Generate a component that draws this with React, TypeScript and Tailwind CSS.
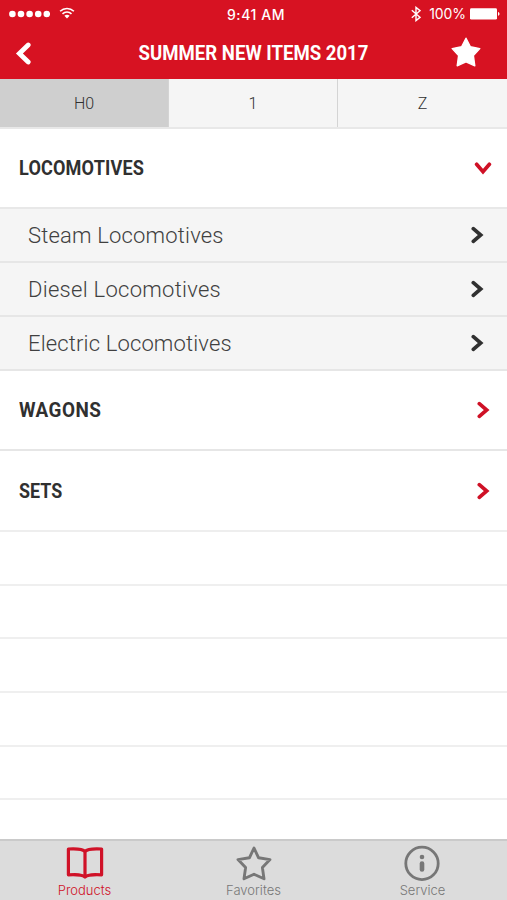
import React, { useState } from 'react';

const scales = ['H0', '1', 'Z'];

const subItems = [
  { label: 'Steam Locomotives', text: 'tracking-[0.18px]' },
  { label: 'Diesel Locomotives', text: 'tracking-[0.28px]' },
  { label: 'Electric Locomotives', text: 'tracking-[0.15px]' },
];

const Chevron: React.FC<{ className?: string }> = ({ className }) => (
  <svg
    width="18"
    height="18"
    viewBox="0 0 18 18"
    fill="none"
    stroke="currentColor"
    strokeWidth="3.7"
    strokeLinecap="round"
    className={className}
  >
    <path d="M5.3 2.6 L12.7 9 L5.3 15.4" strokeLinejoin="miter" />
  </svg>
);

const StatusBar: React.FC = () => (
  <div className="flex h-[27px] items-center justify-between pl-[9px] pr-[7px]">
    <div className="flex w-[180px] items-center">
      <svg width="41" height="8" viewBox="0 0 41 8" fill="currentColor">
        <circle cx="3.4" cy="4" r="3.3" />
        <circle cx="12" cy="4" r="3.3" />
        <circle cx="20.6" cy="4" r="3.3" />
        <circle cx="29.2" cy="4" r="3.3" />
        <circle cx="37.8" cy="4" r="3.3" />
      </svg>
      <svg width="16" height="12" viewBox="0 0 16 12" fill="none" stroke="currentColor" className="mb-[2px] ml-[9px]">
        <path d="M1.1 4.3 C5 .5 11 .5 14.9 4.3" strokeWidth="1.6" />
        <path d="M3.5 6.8 C6 4.4 10 4.4 12.5 6.8" strokeWidth="1.6" />
        <path d="M8 11.4 L5.4 8.8 C6.9 7.5 9.1 7.5 10.6 8.8 Z" fill="currentColor" stroke="none" />
      </svg>
    </div>
    <span className="pt-[1px] pl-[3px] text-[14px] font-medium tracking-[0.55px]">9:41 AM</span>
    <div className="flex w-[180px] items-center justify-end">
      <svg width="10" height="16" viewBox="0 0 10 16" fill="none" stroke="currentColor" strokeWidth="1.4">
        <path d="M.8 4.2 L9 11.3 L5 14.6 V1.4 L9 4.7 L.8 11.8" />
      </svg>
      <span className="ml-[8px] text-[14px] tracking-[-0.1px]">100%</span>
      <svg width="30" height="12" viewBox="0 0 30 12" fill="currentColor" className="ml-[4px]">
        <rect x="0" y="0.2" width="27" height="11.4" rx="1.4" />
        <path d="M28 4 C30 4.4 30 7.4 28 7.8 Z" />
      </svg>
    </div>
  </div>
);

interface SectionRowProps {
  title: string;
  text: string;
  open?: boolean;
  onClick?: () => void;
}

const SectionRow: React.FC<SectionRowProps> = ({ title, text, open, onClick }) => (
  <button
    onClick={onClick}
    className="flex w-full items-center justify-between pl-[19px] pr-[15px] text-left text-[#303030]"
  >
    <span className={`origin-left pt-[2px] text-[21px] font-bold ${text}`}>{title}</span>
    <Chevron className={open ? 'rotate-90 text-[#cf1126]' : 'text-[#cf1126]'} />
  </button>
);

const App: React.FC = () => {
  const [scale, setScale] = useState('H0');
  const [open, setOpen] = useState(true);

  return (
    <div className="flex h-[900px] w-[507px] flex-col overflow-hidden bg-white font-['Inter','Liberation_Sans',sans-serif]">
      <header className="h-[79px] shrink-0 bg-[#d71222] text-white">
        <StatusBar />
        <div className="grid h-[52px] grid-cols-[80px_1fr_80px] items-center">
          <svg
            width="18"
            height="24"
            viewBox="0 0 18 24"
            fill="none"
            stroke="currentColor"
            strokeWidth="4.8"
            strokeLinecap="round"
            className="ml-[15px]"
          >
            <path d="M13.2 4 L4.4 12.5 L13.2 21" />
          </svg>
          <h1 className="scale-x-[0.885] pt-[1px] text-center text-[21px] font-bold whitespace-nowrap font-['Roboto',sans-serif]">
            SUMMER NEW ITEMS 2017
          </h1>
          <svg
            width="30"
            height="30"
            viewBox="0 0 30 30"
            fill="currentColor"
            stroke="currentColor"
            strokeWidth="1.4"
            strokeLinejoin="round"
            className="mb-[2px] ml-[24px]"
          >
            <path d="M15 1.2 L19.4 9.8 L28.8 11.6 L22.4 18.6 L23.8 28.8 L15 24.8 L6.2 28.8 L7.6 18.6 L1.2 11.6 L10.6 9.8 Z" />
          </svg>
        </div>
      </header>

      <nav className="grid h-[50px] shrink-0 grid-cols-3 border-b-2 border-[#e8e8e8]">
        {scales.map((s) => (
          <button
            key={s}
            onClick={() => setScale(s)}
            className={`border-r border-[#d4d4d4] pt-[2px] text-[16px] font-light text-[#303030] last:border-r-0 font-['Roboto',sans-serif] ${
              scale === s ? 'bg-[#cfcfcf]' : 'bg-[#f5f5f5]'
            }`}
          >
            {s}
          </button>
        ))}
      </nav>

      <main className="flex-1 overflow-hidden font-['Roboto',sans-serif]">
        <div className="flex h-[80px] border-b-2 border-[#e8e8e8]">
          <SectionRow
            title="LOCOMOTIVES"
            text="scale-x-[0.86] tracking-[0.2px]"
            open={open}
            onClick={() => setOpen(!open)}
          />
        </div>
        {open &&
          subItems.map((item) => (
            <div
              key={item.label}
              className="flex h-[54px] items-center justify-between border-b-2 border-[#e6e6e6] bg-[#f5f5f5] pr-[21px] pl-[28px] text-[#303030]"
            >
              <span className={`pt-[1px] text-[22px] font-light whitespace-nowrap text-[#404040] ${item.text}`}>{item.label}</span>
              <Chevron />
            </div>
          ))}
        <div className="flex h-[80px] border-b-2 border-[#e6e6e6]">
          <SectionRow title="WAGONS" text="scale-x-[0.9] tracking-[0.5px]" />
        </div>
        <div className="flex h-[81px] border-b-2 border-[#eeeeee]">
          <SectionRow title="SETS" text="scale-x-[0.85]" />
        </div>
        {[0, 1, 2, 3, 4].map((row) => (
          <div key={row} className="h-[53.7px] border-b-2 border-[#efefef]" />
        ))}
      </main>

      <footer className="grid h-[61px] shrink-0 grid-cols-3 border-t-2 border-[#cacaca] bg-[#dcdcdc] text-[#777777] font-['Inter',sans-serif]">
        <button className="flex flex-col items-center pt-[4px] text-[#d01228]">
          <svg width="40" height="36" viewBox="0 0 40 36" fill="none" stroke="currentColor" strokeWidth="3.2" strokeLinejoin="round">
            <path d="M20 6.6 C17.6 3.8 13 3.4 3.4 4 V29.8 C12 29.4 17 29.4 20 32 C23 29.4 28 29.4 36.6 29.8 V4 C27 3.4 22.4 3.8 20 6.6 Z M20 7 V32" />
          </svg>
          <span className="pt-[1px] text-[13px] leading-[17px] font-light">Products</span>
        </button>
        <button className="flex flex-col items-center pt-[4px]">
          <svg width="40" height="36" viewBox="0 0 40 36" fill="none" stroke="currentColor" strokeWidth="2.9" strokeLinejoin="round">
            <path d="M20 3 L24.6 12.8 L36 14.6 L28.4 22.6 L30 33.8 L20 29.2 L10 33.8 L11.6 22.6 L4 14.6 L15.4 12.8 Z" />
          </svg>
          <span className="pt-[1px] text-[13px] leading-[17px] font-light">Favorites</span>
        </button>
        <button className="flex flex-col items-center pt-[4px]">
          <svg width="40" height="36" viewBox="0 0 40 36" fill="none" stroke="currentColor" strokeWidth="2.8" className="-ml-[1px]">
            <circle cx="20" cy="18.4" r="16.2" />
            <circle cx="20" cy="12" r="2.3" fill="currentColor" stroke="none" />
            <path d="M20 18.6 V24.4" strokeWidth="4.6" strokeLinecap="round" />
          </svg>
          <span className="pt-[1px] text-[13px] leading-[17px] font-light">Service</span>
        </button>
      </footer>
    </div>
  );
};

export default App;
